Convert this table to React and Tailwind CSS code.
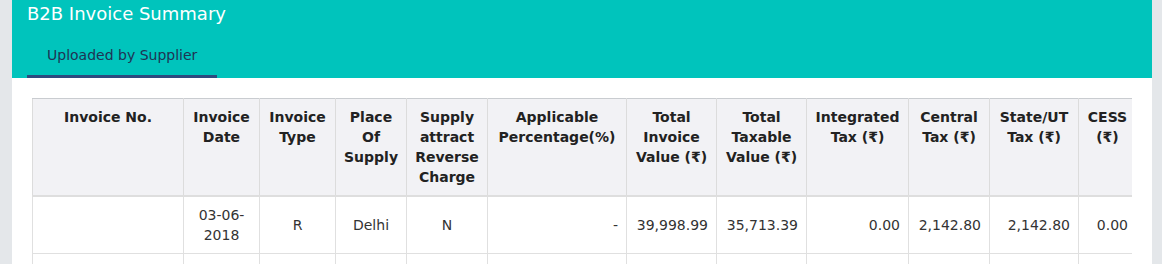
import React from "react";

const cols = [151, 76, 76, 71, 81, 139, 90, 90, 102, 81, 89, 58];

const headers = [
  ["Invoice No."],
  ["Invoice", "Date"],
  ["Invoice", "Type"],
  ["Place", "Of", "Supply"],
  ["Supply", "attract", "Reverse", "Charge"],
  ["Applicable", "Percentage(%)"],
  ["Total", "Invoice", "Value (₹)"],
  ["Total", "Taxable", "Value (₹)"],
  ["Integrated", "Tax (₹)"],
  ["Central", "Tax (₹)"],
  ["State/UT", "Tax (₹)"],
  ["CESS", "(₹)"],
];

export default function App() {
  return (
    <div
      className="flex w-[1162px] bg-[#e4e7ea]"
      style={{ fontFamily: '"DejaVu Sans", Verdana, "Noto Sans", sans-serif' }}
    >
      <div className="w-[12px] shrink-0" />
      <div className="w-[1140px] shrink-0 bg-white pb-4">
        <div className="h-[78px] bg-[#00c4bc] px-[15px]">
          <div className="text-[18px] leading-[28px] text-white">B2B Invoice Summary</div>
          <div className="mt-[7px] flex">
            <div className="border-b-[3px] border-[#2d4a7e] px-[20px] py-[10px] text-[14px] leading-[20px] text-[#1f3354]">
              Uploaded by Supplier
            </div>
          </div>
        </div>
        <div className="mx-[20px] mt-[20px] w-[1100px] overflow-hidden">
          <table className="table-fixed border-collapse text-[14px] leading-[20px]" style={{ width: 1104 }}>
            <colgroup>
              {cols.map((w, i) => (
                <col key={i} style={{ width: w }} />
              ))}
            </colgroup>
            <thead>
              <tr className="bg-[#f2f2f5]">
                {headers.map((lines, i) => (
                  <th
                    key={i}
                    className="border border-t-[#c9ccd0] border-x-[#dcdcdc] border-b-2 border-b-[#dedede] px-[5px] pt-[8px] pb-[8px] text-center align-top font-bold text-[#222]"
                  >
                    {lines.map((l, j) => (
                      <div key={j} className="whitespace-nowrap">{l}</div>
                    ))}
                  </th>
                ))}
              </tr>
            </thead>
            <tbody className="text-[#333]">
              <tr>
                <td className="border border-[#e0e0e0] px-[8px] py-[8px]"></td>
                <td className="border border-[#e0e0e0] px-[8px] py-[8px] text-center">
                  03-06-<br />2018
                </td>
                <td className="border border-[#e0e0e0] px-[8px] py-[8px] text-center">R</td>
                <td className="border border-[#e0e0e0] px-[8px] py-[8px] text-center">Delhi</td>
                <td className="border border-[#e0e0e0] px-[8px] py-[8px] text-center">N</td>
                <td className="border border-[#e0e0e0] px-[8px] py-[8px] text-right">-</td>
                <td className="border border-[#e0e0e0] px-[8px] py-[8px] text-right">39,998.99</td>
                <td className="border border-[#e0e0e0] px-[8px] py-[8px] text-right">35,713.39</td>
                <td className="border border-[#e0e0e0] px-[8px] py-[8px] text-right">0.00</td>
                <td className="border border-[#e0e0e0] px-[8px] py-[8px] text-right">2,142.80</td>
                <td className="border border-[#e0e0e0] px-[8px] py-[8px] text-right">2,142.80</td>
                <td className="border border-[#e0e0e0] px-[8px] py-[8px] text-right">0.00</td>
              </tr>
              <tr>
                {cols.map((_, i) => (
                  <td key={i} className="h-[56px] border border-[#e0e0e0] px-[8px] py-[8px]"></td>
                ))}
              </tr>
            </tbody>
          </table>
        </div>
      </div>
      <div className="w-[10px] shrink-0" />
    </div>
  );
}
